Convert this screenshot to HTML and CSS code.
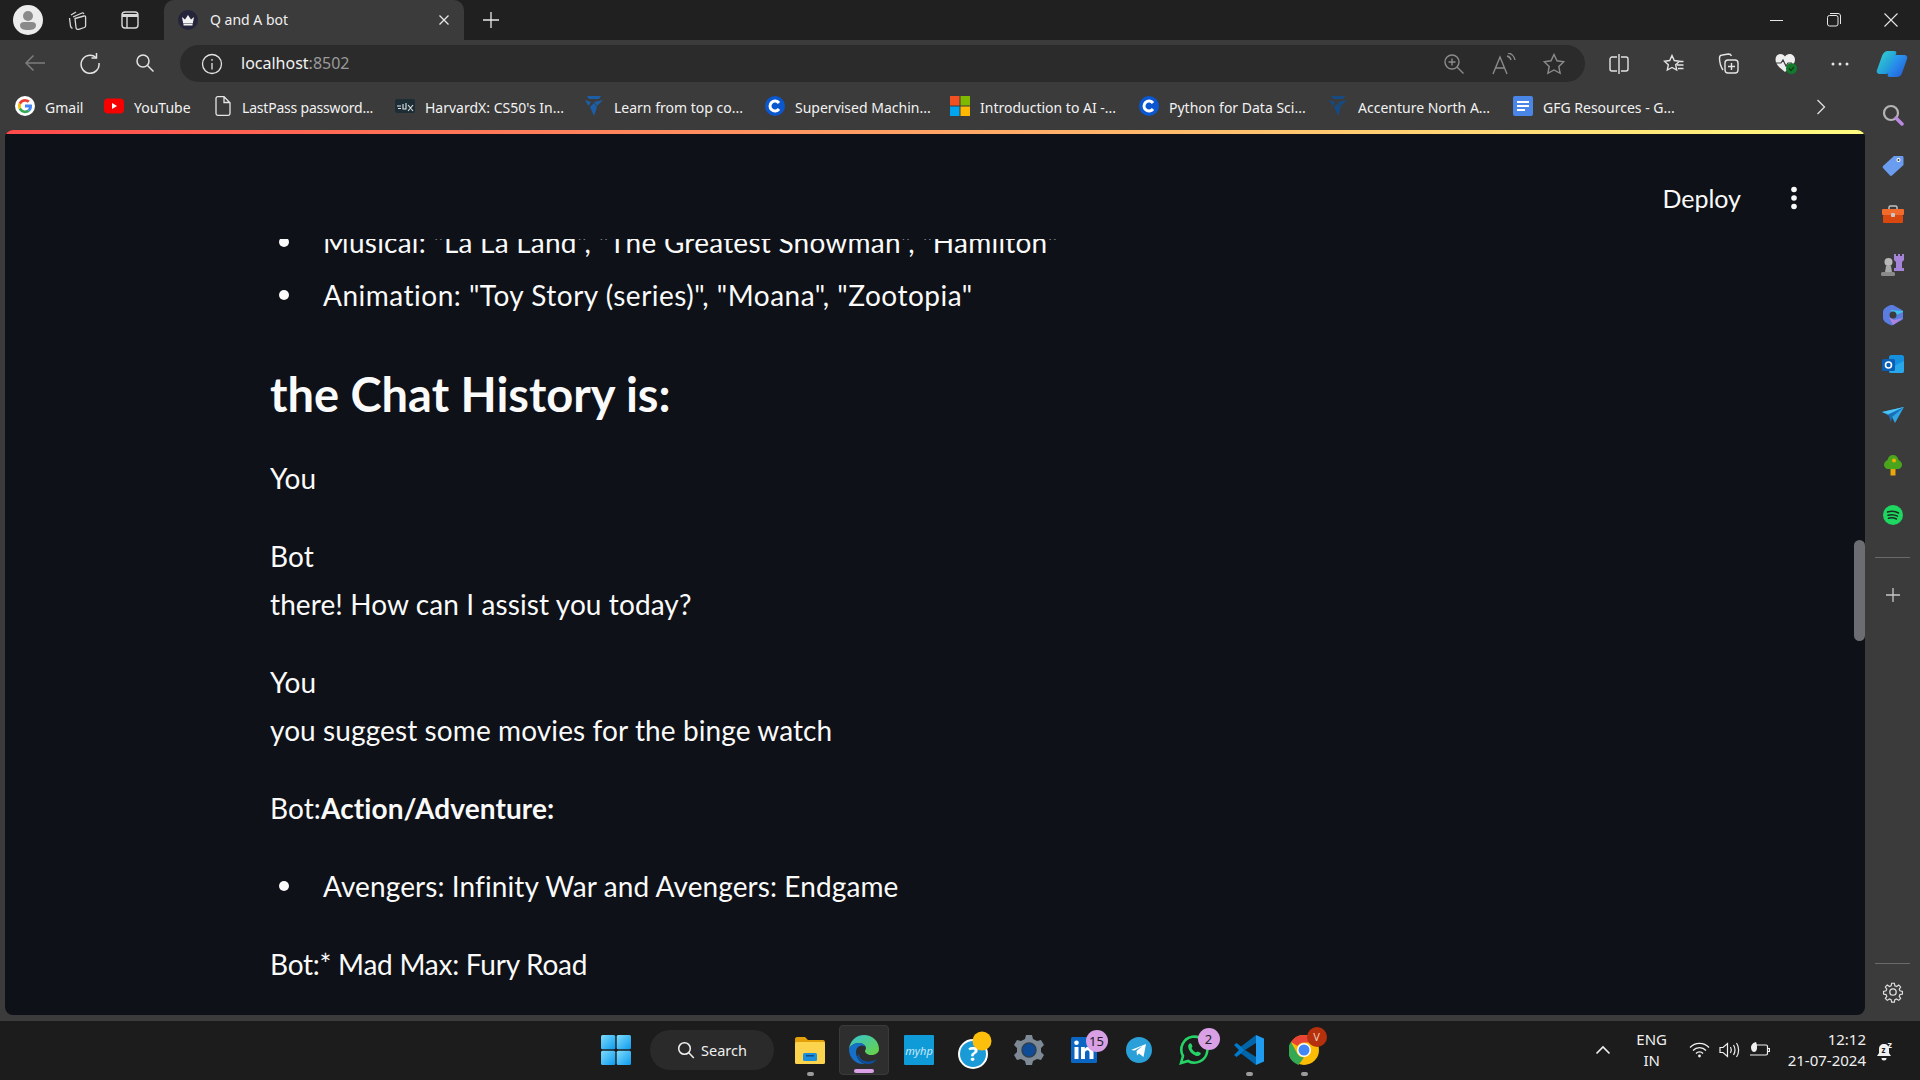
FILE: index.html
```html
<!DOCTYPE html>
<html lang="en">
<head>
    <meta charset="UTF-8" />
    <title>Q and A bot</title>
    <link rel="stylesheet" href="styles.css">
</head>
<body>
    <!-- ========= Title bar ========= -->
    <div class="titlebar">
        <div class="tb-left">
            <svg class="profile" width="30" height="30" viewBox="0 0 30 30"><circle cx="15" cy="15" r="15" fill="#ececec"/><circle cx="15" cy="11" r="5" fill="#8a8a8a"/><path d="M7 20c0-2 2-3 4-3h8c2 0 4 1 4 3 0 4-3 5-8 5s-8-1-8-5z" fill="#8a8a8a"/></svg>
            <svg class="tb-icon first" width="22" height="22" viewBox="0 0 22 22" fill="none" stroke="#d8d8d8" stroke-width="1.3"><path d="M4 6l5-3M2.500 9l1 8c.2 1 1 2 2 2.500M6 8l9-4c1-.3 1.500 0 1.800 1M8 9.500l9-2.500c1-.2 1.600.2 1.600 1.200v8.500c0 1-.5 1.500-1.300 1.800l-5.500 1.800c-1.400.4-2.800-.2-2.800-1.800z"/></svg>
            <svg class="tb-icon second" width="20" height="20" viewBox="0 0 20 20" fill="none" stroke="#d8d8d8" stroke-width="1.4"><rect x="2" y="2" width="16" height="16" rx="3"/><path d="M2 5.500h16" stroke-width="3"/><path d="M7 5v13"/></svg>
        </div>
        <div class="tab">
            <svg width="20" height="20" viewBox="0 0 20 20"><circle cx="10" cy="10" r="10" fill="#24243a"/><path d="M4 7l3 2.500L10 5l3 4.500L16 7l-1.200 6.500H5.200z" fill="#f2f2f2"/><rect x="5.500" y="14" width="9" height="1.500" fill="#f2f2f2"/></svg>
            <span class="tab-title">Q and A bot</span>
            <svg class="tab-close" width="12" height="12" viewBox="0 0 12 12" stroke="#e8e8e8" stroke-width="1.3"><path d="M1.500 1.500l9 9M10.500 1.500l-9 9"/></svg>
        </div>
        <svg class="new-tab" width="18" height="18" viewBox="0 0 18 18" stroke="#e8e8e8" stroke-width="1.300"><path d="M9 1v16M1 9h16"/></svg>
        <div class="win-controls">
            <svg width="14" height="14" viewBox="0 0 14 14" stroke="#e6e6e6" stroke-width="1"><path d="M0 7.500h13"/></svg>
            <svg width="14" height="14" viewBox="0 0 14 14" fill="none" stroke="#e6e6e6" stroke-width="1"><rect x=".5" y="2.500" width="10.500" height="10.500" rx="2"/><path d="M3 .5h8c1.500 0 2.500 1 2.500 2.500v8"/></svg>
            <svg width="14" height="14" viewBox="0 0 14 14" stroke="#e6e6e6" stroke-width="1.100"><path d="M.5.5l13 13M13.500.5l-13 13"/></svg>
        </div>
    </div>

    <!-- ========= Toolbar ========= -->
    <div class="toolbar">
        <svg class="nav back" width="22" height="18" viewBox="0 0 22 18" fill="none" stroke="#7d7d7d" stroke-width="1.500"><path d="M21 9H2M9.500 1.500L2 9l7.500 7.500"/></svg>
        <svg class="nav reload" width="22" height="22" viewBox="0 0 22 22" fill="none" stroke="#e4e4e4" stroke-width="1.500"><path d="M17 5.500A9 9 0 1 0 20 11"/><path d="M17.500 1v5h-5"/></svg>
        <svg class="nav find" width="20" height="20" viewBox="0 0 20 20" fill="none" stroke="#e4e4e4" stroke-width="1.500"><circle cx="8" cy="8" r="6"/><path d="M12.500 12.500l6 6"/></svg>
        <div class="addressbar">
            <svg width="22" height="22" viewBox="0 0 22 22" fill="none" stroke="#e4e4e4" stroke-width="1.300"><circle cx="11" cy="11" r="9.500"/><path d="M11 10v6.500M11 6v1.800"/></svg>
            <span class="url">localhost<span class="url-port">:8502</span></span>
            <div class="addr-actions">
                <svg width="22" height="22" viewBox="0 0 22 22" fill="none" stroke="#8c8c8c" stroke-width="1.400"><circle cx="9" cy="9" r="7"/><path d="M14 14l6.500 6.500M9 5.500v7M5.500 9h7"/></svg>
                <svg width="24" height="22" viewBox="0 0 24 22" fill="none" stroke="#8c8c8c" stroke-width="1.400"><path d="M1 21L8 4l7 17M3.500 15h9M15 3c2 .5 3.500 2 4 4M16 0c3.500.5 6.500 3.500 7 7"/></svg>
                <svg width="22" height="22" viewBox="0 0 22 22" fill="none" stroke="#8c8c8c" stroke-width="1.400"><path d="M11 1.500l3 6.300 6.800.9-5 4.800 1.300 6.800-6.100-3.300-6.100 3.300 1.300-6.800-5-4.800 6.800-.9z"/></svg>
            </div>
        </div>
        <div class="tool-actions">
            <svg width="20" height="20" viewBox="0 0 20 20" fill="none" stroke="#e4e4e4" stroke-width="1.400"><path d="M8 3H3C2 3 1 4 1 5v10c0 1 1 2 2 2h5M12 3h5c1 0 2 1 2 2v10c0 1-1 2-2 2h-5M10 0v20"/></svg>
            <svg width="21" height="20" viewBox="0 0 21 20" fill="none" stroke="#e4e4e4" stroke-width="1.400"><path d="M9 1.500l2.300 5 5.200.7-3.800 3.600 1 5.200-4.700-2.500L4.300 16l1-5.200L1.500 7.200l5.200-.7zM14 11h6.500M15 14.500h5.500M17 7.500h3.500"/></svg>
            <svg width="21" height="21" viewBox="0 0 21 21" fill="none" stroke="#e4e4e4" stroke-width="1.400"><path d="M5 17C3 14 1.500 9 1.500 5c0-1.500 1-3 3-3l6-1c1.500 0 2.500 .8 3 2"/><rect x="7" y="7" width="13" height="13" rx="3"/><path d="M13.500 10v7M10 13.500h7"/></svg>
            <svg class="health" width="23" height="22" viewBox="0 0 23 22"><path d="M10 19C6 16 .5 12 .5 6.500 .5 3 3 1 5.500 1 7.500 1 9 2 10 3.500 11 2 12.500 1 14.500 1 17 1 20 3 20 6.500c0 2-1 4-2 5-3 3-6 6-8 7.500z" fill="#eeeeee"/><path d="M1 10h5l2-3 3 6 2-3h4" fill="none" stroke="#3b3b3b" stroke-width="1.200"/><circle cx="16.500" cy="15.500" r="5.500" fill="#137a2c"/><path d="M14 15.500l2 2 3-3.500" fill="none" stroke="#0b3d18" stroke-width="1.200"/></svg>
            <svg class="dots" width="20" height="6" viewBox="0 0 20 6" fill="#e4e4e4"><circle cx="3" cy="3" r="1.500"/><circle cx="10" cy="3" r="1.500"/><circle cx="17" cy="3" r="1.500"/></svg>
            <svg class="copilot" width="32" height="28" viewBox="0 0 32 28"><defs><linearGradient id="copA" x1="0" y1="0" x2="1" y2="1"><stop offset="0" stop-color="#35d6d0"/><stop offset="1" stop-color="#1a7fe0"/></linearGradient><linearGradient id="copB" x1="0" y1="0" x2="1" y2="1"><stop offset="0" stop-color="#2bb3f5"/><stop offset="1" stop-color="#2455d9"/></linearGradient></defs><path d="M12 1h6c2 0 3 1 2 3l-6 17c-.8 2-2 3-4 3H4c-2.500 0-4-2-3-4L6 6c1-3 3-5 6-5z" fill="url(#copA)"/><path d="M20 5h8c2.500 0 4 2 3 4l-5 14c-1 3-3 4-6 4h-6c-2 0-3-1-2-3l6-17c.5-1 1-2 2-2z" fill="url(#copB)"/></svg>
        </div>
    </div>

    <div class="workspace">
        <div class="left-col">
            <!-- ========= Bookmarks ========= -->
            <div class="bookmarks">
                <div class="bm">
                    <svg width="20" height="20" viewBox="0 0 20 20"><circle cx="10" cy="10" r="10" fill="#fff"/><path d="M17 10.200c0-.6 0-1.100-.2-1.600H10v3h3.900c-.2.900-.7 1.700-1.500 2.200l2.300 1.800c1.400-1.300 2.300-3.100 2.300-5.400z" fill="#4285f4"/><path d="M10 17.200c1.900 0 3.500-.6 4.700-1.700l-2.300-1.800c-.6.400-1.400.7-2.400.7-1.900 0-3.400-1.200-4-2.900L3.700 13.300c1.200 2.300 3.600 3.900 6.300 3.900z" fill="#34a853"/><path d="M6 11.500c-.3-.9-.3-1.900 0-2.900L3.700 6.800c-1 1.900-1 4.500 0 6.500z" fill="#fbbc05"/><path d="M10 5.700c1 0 2 .4 2.700 1.100l2-2C13.500 3.600 11.800 2.900 10 2.900c-2.700 0-5.100 1.500-6.300 3.900L6 8.600c.6-1.700 2.100-2.900 4-2.900z" fill="#ea4335"/></svg>
                    <span>Gmail</span>
                </div>
                <div class="bm">
                    <svg width="20" height="20" viewBox="0 0 20 20"><rect y="2.500" width="20" height="15" rx="4" fill="#f70000"/><path d="M8 7l5 3-5 3z" fill="#fff"/></svg>
                    <span>YouTube</span>
                </div>
                <div class="bm tight">
                    <svg width="20" height="20" viewBox="0 0 20 20" fill="none" stroke="#e6e6e6" stroke-width="1.300"><path d="M3 2.500c0-1 .8-1.800 1.800-1.800h6.200l6 6v10.800c0 1-.8 1.800-1.800 1.800H4.800c-1 0-1.800-.8-1.800-1.800zM11 1v5.500h6"/></svg>
                    <span>LastPass password...</span>
                </div>
                <div class="bm">
                    <svg width="20" height="20" viewBox="0 0 20 20"><rect y="3" width="20" height="14" rx="2" fill="#1d2d35"/><path d="M2 10h4M3 12.500h3M8 8v5h3V7M13 9l5 6M18 9l-5 6" fill="none" stroke="#dfe7ea" stroke-width="1.100"/></svg>
                    <span>HarvardX: CS50's In...</span>
                </div>
                <div class="bm">
                    <svg width="20" height="20" viewBox="0 0 20 20" fill="#1c5fa8"><path d="M3 0h14l-2 3H5zM1 4l6 2-2.500 4zM19 4l-9 2 3 4zM6 11l4-4 3 4-3 9z"/></svg>
                    <span>Learn from top co...</span>
                </div>
                <div class="bm">
                    <svg width="20" height="20" viewBox="0 0 20 20"><circle cx="10" cy="10" r="10" fill="#0a57d0"/><path d="M14 7a5 5 0 1 0 0 6" fill="none" stroke="#fff" stroke-width="3"/></svg>
                    <span>Supervised Machin...</span>
                </div>
                <div class="bm">
                    <svg width="20" height="20" viewBox="0 0 20 20"><rect width="9.500" height="9.500" fill="#f25022"/><rect x="10.500" width="9.500" height="9.500" fill="#7fba00"/><rect y="10.500" width="9.500" height="9.500" fill="#00a4ef"/><rect x="10.500" y="10.500" width="9.500" height="9.500" fill="#ffb900"/></svg>
                    <span>Introduction to AI -...</span>
                </div>
                <div class="bm">
                    <svg width="20" height="20" viewBox="0 0 20 20"><circle cx="10" cy="10" r="10" fill="#0a57d0"/><path d="M14 7a5 5 0 1 0 0 6" fill="none" stroke="#fff" stroke-width="3"/></svg>
                    <span>Python for Data Sci...</span>
                </div>
                <div class="bm">
                    <svg width="20" height="20" viewBox="0 0 20 20" fill="#174a80"><path d="M3 0h14l-2 3H5zM1 4l6 2-2.500 4zM19 4l-9 2 3 4zM6 11l4-4 3 4-3 9z"/></svg>
                    <span>Accenture North A...</span>
                </div>
                <div class="bm">
                    <svg width="20" height="20" viewBox="0 0 20 20"><rect width="20" height="20" rx="2" fill="#4a86e8"/><path d="M4 5h12v2H4zM4 9h12v2H4zM4 13h8v2H4z" fill="#fff"/></svg>
                    <span>GFG Resources - G...</span>
                </div>
                <svg class="bm-more" width="10" height="16" viewBox="0 0 10 16" fill="none" stroke="#e0e0e0" stroke-width="1.300"><path d="M1.500 1l7 7-7 7"/></svg>
            </div>

            <!-- ========= Page ========= -->
            <main class="page">
                <div class="st-decoration"></div>
                <header class="st-header">
                    <span class="deploy">Deploy</span>
                    <svg class="kebab" width="8" height="24" viewBox="0 0 8 24" fill="#fafafa"><circle cx="4" cy="3.500" r="2.800"/><circle cx="4" cy="12" r="2.800"/><circle cx="4" cy="20.500" r="2.800"/></svg>
                </header>
                <div class="st-scrollbar"></div>
                <div class="st-block">
                    <ul class="answer">
                        <li class="quoted long">Musical: "La La Land", "The Greatest Showman", "Hamilton"</li>
                        <li class="quoted">Animation: "Toy Story (series)", "Moana", "Zootopia"</li>
                    </ul>
                    <h2>the Chat History is:</h2>
                    <p>You</p>
                    <p>Bot<br>there! How can I assist you today?</p>
                    <p>You<br>you suggest some movies for the binge watch</p>
                    <p>Bot:<strong>Action/Adventure:</strong></p>
                    <ul class="answer inline">
                        <li>Avengers: Infinity War and Avengers: Endgame</li>
                    </ul>
                    <p class="narrow">Bot:* Mad Max: Fury Road</p>
                </div>
            </main>
        </div>

        <!-- ========= Edge sidebar ========= -->
        <aside class="sidebar">
            <div class="side-icons">
                <div class="side-grid">
                    <svg width="22" height="22" viewBox="0 0 22 22" fill="none"><circle cx="9" cy="9" r="7" stroke="#b4b4b4" stroke-width="2.200"/><path d="M14 14l6 6" stroke="#b98ae0" stroke-width="3.500" stroke-linecap="round"/></svg>
                    <svg width="22" height="22" viewBox="0 0 22 22"><path d="M12 2h8c1 0 1.500.7 1.500 1.500v7.500L10 21.500c-.7.6-1.500.6-2 0L1 14c-.5-.6-.5-1.400 0-2z" fill="#6a9df0"/><circle cx="16.500" cy="6" r="2" fill="#fff"/><circle cx="16.500" cy="6" r="1" fill="#333"/></svg>
                    <svg width="22" height="22" viewBox="0 0 22 22"><path d="M7 6V3.500C7 2.500 7.800 2 8.500 2h5c.7 0 1.500.5 1.500 1.500V6" fill="none" stroke="#c2c2c2" stroke-width="1.500"/><rect y="5" width="22" height="6" rx="1" fill="#f26b2d"/><rect x="1" y="11" width="20" height="8" rx="1" fill="#d9480f"/><rect x="9" y="9" width="4" height="4" rx="1" fill="#c8c8c8"/></svg>
                    <svg width="24" height="24" viewBox="0 0 24 24"><circle cx="7.500" cy="9" r="4" fill="#b8b8b8"/><path d="M5 13h5l1 6H4z" fill="#a8a8a8"/><rect y="19" width="14" height="4" rx="1.500" fill="#8a8a8a"/><path d="M13 1h2v2h2V1h2v2h2V1h2v6l-2 2v6h2v3H13v-3h2V9l-2-2z" fill="#a583d8"/></svg>
                    <svg width="22" height="22" viewBox="0 0 22 22"><path d="M11 1l9 5c1 .5 1 1 1 2v6c0 1 0 1.500-1 2l-9 5c-1 .5-1.500.5-2.500 0C4 19 1 17 1 14V8c0-3 3-5 7.500-7z" fill="#5b7ce0"/><path d="M8 6l13 1v1l-7 3z" fill="#3fc1e8"/><path d="M21 14l-9 2-5-3 4 8z" fill="#b084dd"/><circle cx="11" cy="11" r="3.500" fill="#3b3b3b"/></svg>
                    <svg width="22" height="20" viewBox="0 0 22 20"><path d="M9 0h11c1 0 2 1 2 2v14c0 1-1 2-2 2H9c-1 0-2-1-2-2V2c0-1 1-2 2-2z" fill="#1490df"/><path d="M14 10l8-4v10c0 1-1 2-2 2H9c-1 0-2-1-2-2z" fill="#28a8ea"/><rect y="4" width="13" height="12" rx="1.500" fill="#0a5fb4"/><circle cx="6.500" cy="10" r="3" fill="none" stroke="#fff" stroke-width="1.600"/></svg>
                    <svg width="22" height="16" viewBox="0 0 22 16"><path d="M0 5l22-5-9 16-3-6z" fill="#2ea6e6"/><path d="M6 6l16-6-12 10-1 5z" fill="#1a6fb8"/><path d="M0 5l7 2L22 0z" fill="#4cc4f5"/></svg>
                    <svg width="18" height="21" viewBox="0 0 18 21"><path d="M9 0c3 0 5 2 5.500 5C17 6 18 8 18 10c0 2-2 4-4 4H4c-2 0-4-2-4-4 0-2 1-4 3.500-5C4 2 6 0 9 0z" fill="#4aa51d"/><rect x="6.500" y="14" width="5" height="6.500" fill="#e8a80c"/><circle cx="10" cy="5.500" r="2" fill="#f4b000"/></svg>
                    <svg width="20" height="20" viewBox="0 0 20 20"><circle cx="10" cy="10" r="10" fill="#1ed760"/><path d="M4.500 7c3.500-1 8-.8 11 1M5 10.200c3-.8 6.800-.6 9.500 .9M5.500 13.200c2.500-.6 5.500-.4 8 .8" fill="none" stroke="#1a2d1f" stroke-width="1.500" stroke-linecap="round"/></svg>
                </div>
                <div class="side-rule"></div>
                <svg class="side-add" width="16" height="16" viewBox="0 0 16 16" stroke="#c8c8c8" stroke-width="1.300"><path d="M8 1v14M1 8h14"/></svg>
            </div>
            <div class="side-bottom">
                <div class="side-rule"></div>
                <svg width="22" height="22" viewBox="0 0 22 22" fill="none" stroke="#e0e0e0" stroke-width="1.300"><circle cx="11" cy="11" r="3.200"/><path d="M9.500 1.300h3l.6 2.800 1.900.8 2.400-1.600 2.100 2.100-1.600 2.400.8 1.900 2.800.6v3l-2.800.6-.8 1.900 1.600 2.400-2.100 2.100-2.400-1.600-1.900.8-.6 2.800h-3l-.6-2.800-1.900-.8-2.400 1.600-2.100-2.100 1.600-2.400-.8-1.900-2.800-.6v-3l2.800-.6.8-1.900-1.600-2.400 2.100-2.100 2.400 1.600 1.900-.8z" transform="translate(1.100 1.100) scale(.9)"/></svg>
            </div>
        </aside>
    </div>

    <!-- ========= Taskbar ========= -->
    <footer class="taskbar">
        <div></div>
        <div class="apps">
            <svg class="start" width="30" height="30" viewBox="0 0 30 30"><defs><linearGradient id="winG" x1="0" y1="0" x2="1" y2="1"><stop offset="0" stop-color="#7fdcfb"/><stop offset="1" stop-color="#0d9bf0"/></linearGradient></defs><rect width="14.300" height="14.300" rx="1.500" fill="url(#winG)"/><rect x="15.700" width="14.300" height="14.300" rx="1.500" fill="url(#winG)"/><rect y="15.700" width="14.300" height="14.300" rx="1.500" fill="url(#winG)"/><rect x="15.700" y="15.700" width="14.300" height="14.300" rx="1.500" fill="url(#winG)"/></svg>
            <div class="search-pill">
                <svg width="18" height="18" viewBox="0 0 18 18" fill="none" stroke="#f0f0f0" stroke-width="1.500"><circle cx="7.500" cy="7.500" r="5.800"/><path d="M11.800 11.800l5 5.200"/></svg>
                <span>Search</span>
            </div>
            <div class="app">
                <svg width="30" height="28" viewBox="0 0 30 28"><path d="M0 3c0-1 1-2 2-2h8l3 3h15c1 0 2 1 2 2v4H0z" fill="#e3a008"/><rect y="6" width="30" height="22" rx="1.500" fill="#fcd34d"/><rect x="8" y="17" width="14" height="8" rx="1.500" fill="#1c8fdc"/><rect x="11" y="19" width="8" height="1.500" fill="#0d4f86"/></svg>
                <i class="dot"></i>
            </div>
            <div class="app active">
                <svg width="30" height="30" viewBox="0 0 30 30"><defs><linearGradient id="edgeG" x1="0" y1="0" x2="1" y2="1"><stop offset="0" stop-color="#36c3d6"/><stop offset="1" stop-color="#6ad43e"/></linearGradient></defs><path d="M15 0c8 0 15 6 15 14 0 4-4 6-8 6-3 0-6-2-6-4 0-1 1-1.500 1-3 0-3-4-5-7-5C5 8 1 11 0 14 1 6 7 0 15 0z" fill="url(#edgeG)"/><path d="M0 14C1 11 5 8 10 8c3 0 7 2 7 5 0-2-4-3-6-2-4 1-5 6-3 11 1 3 4 6 8 7C7 30 0 23 0 14z" fill="#1570c9"/><path d="M8 22c2 4 6 7 11 7 4 0 7-2 9-5-3 2-8 3-12 2-4-1-6-4-6-7-1 1-2 2-2 3z" fill="#0d4f9c"/></svg>
                <i class="dot wide"></i>
            </div>
            <div class="app">
                <svg width="30" height="30" viewBox="0 0 30 30"><rect width="30" height="30" rx="1" fill="#0f9ad8"/><text x="15" y="20" class="myhp">myhp</text></svg>
            </div>
            <div class="app">
                <svg class="help" width="36" height="38" viewBox="0 0 36 38"><circle cx="15" cy="23" r="14" fill="#1a9ad6" stroke="#fff" stroke-width="2"/><circle cx="24" cy="10" r="9.500" fill="#fcbf0c"/><text x="15" y="30" class="help-mark">?</text></svg>
            </div>
            <div class="app">
                <svg width="30" height="30" viewBox="0 0 30 30"><path d="M12 0h6l1 4 4 2 4-1 3 5-3 3v4l3 3-3 5-4-1-4 2-1 4h-6l-1-4-4-2-4 1-3-5 3-3v-4L0 10l3-5 4 1 4-2z" fill="#7d8a96"/><circle cx="15" cy="15" r="7" fill="#0f4c97"/><circle cx="15" cy="15" r="7" fill="none" stroke="#2d3f50" stroke-width="1.500"/></svg>
            </div>
            <div class="app">
                <div class="badged">
                    <svg width="26" height="26" viewBox="0 0 26 26"><rect width="26" height="26" rx="1.500" fill="#0a66c2"/><rect x="3.500" y="10" width="4" height="12" fill="#fff"/><circle cx="5.500" cy="5.800" r="2.300" fill="#fff"/><path d="M10 10h3.800v1.700c.8-1.300 2.100-2 3.800-2 3 0 4.900 1.800 4.900 5.300v7h-4v-6.300c0-1.600-.7-2.500-2-2.500s-2.500 1-2.500 2.700V22h-4z" fill="#fff"/></svg>
                    <b class="badge">15</b>
                </div>
            </div>
            <div class="app">
                <svg width="26" height="26" viewBox="0 0 26 26"><circle cx="13" cy="13" r="13" fill="#2a9fd8"/><path d="M5 13l15-6-2.500 13-4.500-3.500-2 2-.5-4.500 6-5-8 4.500z" fill="#fff"/></svg>
            </div>
            <div class="app">
                <div class="badged">
                    <svg width="30" height="30" viewBox="0 0 30 30"><path d="M2 28l2-7A13 13 0 1 1 9 26z" fill="none" stroke="#25d366" stroke-width="2.600"/><path d="M10 9c1-1 2-1 2.500 0l1 2.500-1 1.500c1 2 2.500 3.500 4.500 4.500l1.500-1 2.500 1c1 .5 1 1.500 0 2.500-2 2-5 1-8-1.500S8 11 10 9z" fill="#25d366"/></svg>
                    <b class="badge">2</b>
                </div>
            </div>
            <div class="app">
                <svg width="30" height="30" viewBox="0 0 30 30"><path d="M22 0l8 3.500v23L22 30z" fill="#1f9cf0"/><path d="M22 0v8L11 15 7 11.500 22 0z" fill="#0065a9"/><path d="M22 30v-8L11 15l-4 3.500z" fill="#0065a9"/><path d="M7 11.500L2.500 8 0 10l5 5-5 5 2.500 2L7 18.500 11 15z" fill="#007acc"/></svg>
                <i class="dot"></i>
            </div>
            <div class="app">
                <div class="badged">
                    <svg width="30" height="30" viewBox="0 0 30 30"><circle cx="15" cy="15" r="15" fill="#fbbc05"/><path d="M15 0a15 15 0 0 1 13 7.500H15A7.500 7.500 0 0 0 8.500 11L2 7A15 15 0 0 1 15 0z" fill="#ea4335"/><path d="M2 7l6.500 12A7.500 7.500 0 0 0 15 22.500L9.500 30A15 15 0 0 1 2 7z" fill="#34a853"/><circle cx="15" cy="15" r="7" fill="#fff"/><circle cx="15" cy="15" r="5.500" fill="#4285f4"/></svg>
                    <b class="badge red">V</b>
                </div>
                <i class="dot"></i>
            </div>
        </div>
        <div class="tray">
            <svg class="chev" width="16" height="10" viewBox="0 0 16 10" fill="none" stroke="#f0f0f0" stroke-width="1.600"><path d="M1.500 8.500L8 2l6.500 6.500"/></svg>
            <div class="lang">ENG<br>IN</div>
            <div class="tray-icons">
                <svg width="21" height="16" viewBox="0 0 21 16" fill="none" stroke="#f0f0f0" stroke-width="1.300"><path d="M1 5.500a13 13 0 0 1 19 0M4 8.500a9 9 0 0 1 13 0M7 11.500a4.500 4.500 0 0 1 7 0"/><circle cx="10.500" cy="14" r="1.400" fill="#f0f0f0" stroke="none"/></svg>
                <svg width="21" height="16" viewBox="0 0 21 16" fill="none" stroke="#f0f0f0" stroke-width="1.200"><path d="M1 5.500v5h3l4.500 4V1.500L4 5.500zM11.500 5c1 1.800 1 4.200 0 6M14.500 3c1.800 3 1.800 7 0 10M17.500 1c2.800 4 2.800 10 0 14"/></svg>
                <svg width="21" height="16" viewBox="0 0 21 16" fill="none" stroke="#f0f0f0" stroke-width="1.200"><path d="M7 3h10c1 0 1.500.7 1.500 1.500v7c0 .8-.5 1.500-1.500 1.500H1M18.500 6.500h2v3h-2"/><path d="M7 0C3 1 1 4 2.500 8c.5 1.200 1.500 2 2.500 2 3 0 4-5 2-10z" fill="#f0f0f0" stroke="none"/></svg>
            </div>
            <div class="clock">12:12<br>21-07-2024</div>
            <svg class="bell" width="18" height="24" viewBox="0 0 18 24"><path d="M8 6c-3 0-5 2-5 5v4l-2 3h14l-2-3v-4c0-3-2-5-5-5z" fill="#f0f0f0"/><path d="M5.500 20a2.500 2.500 0 0 0 5 0z" fill="#f0f0f0"/><text x="5.500" y="15" class="zz small">z</text><text x="11.500" y="10" class="zz">z</text></svg>
        </div>
    </footer>
</body>
</html>
```

FILE: styles.css
```css
:root {
    --chrome: #3b3b3b;
    --titlebar: #202020;
    --addr: #2b2b2b;
    --st-bg: #0e1117;
    --st-text: #fafafa;
    --ui-font: "Noto Sans", "Open Sans", sans-serif;
}

* { box-sizing: border-box; }

html, body {
    height: 100%;
}

body {
    margin: 0;
    width: 1920px;
    height: 1080px;
    display: flex;
    flex-direction: column;
    overflow: hidden;
    background: var(--chrome);
    color: #f0f0f0;
    font-family: var(--ui-font);
}

svg { flex: none; display: block; }

/* ====== Title bar ====== */
.titlebar {
    height: 40px;
    flex: none;
    display: flex;
    align-items: center;
    background: var(--titlebar);
}
.tb-left {
    width: 164px;
    display: flex;
    align-items: center;
    padding-left: 13px;
}
.tb-icon.first { margin-left: 24px; }
.tb-icon.second { margin-left: 31px; }
.tab {
    width: 300px;
    height: 40px;
    display: flex;
    align-items: center;
    padding: 0 14px;
    background: var(--chrome);
    border-radius: 10px 10px 0 0;
}
.tab-title {
    margin: -2px 0 0 12px;
    font-size: 14px;
    flex: 1;
}
.new-tab { margin-left: 18px; }
.win-controls {
    margin-left: auto;
    display: flex;
    align-items: center;
    gap: 43px;
    padding-right: 22px;
}

/* ====== Toolbar ====== */
.toolbar {
    height: 42px;
    flex: none;
    display: flex;
    align-items: flex-start;
    padding-top: 5px;
    background: var(--chrome);
    position: relative;
}
.nav { margin-top: 9px; }
.back { margin-left: 24px; }
.reload { margin-left: 33px; margin-top: 7px; }
.find { margin-left: 34px; margin-top: 8px; }
.addressbar {
    width: 1405px;
    height: 37px;
    margin-left: 25px;
    display: flex;
    align-items: center;
    padding: 0 20px 0 21px;
    background: var(--addr);
    border-radius: 19px;
}
.url {
    margin: -1px 0 0 18px;
    font-size: 16px;
    color: #f2f2f2;
}
.url-port { color: #9a9a9a; }
.addr-actions {
    margin-left: auto;
    display: flex;
    align-items: center;
    gap: 27px;
}
.tool-actions {
    flex: 1;
    height: 37px;
    display: flex;
    align-items: center;
    gap: 34px;
    padding-left: 24px;
}
.health { margin-left: 2px; }
.dots { margin-left: -2px; }
.copilot { margin-left: -8px; }

/* ====== Workspace ====== */
.workspace {
    flex: 1;
    display: flex;
    min-height: 0;
}
.left-col {
    width: 1865px;
    display: flex;
    flex-direction: column;
    padding-bottom: 6px;
}

/* ====== Bookmarks ====== */
.bookmarks {
    height: 48px;
    flex: none;
    display: grid;
    grid-template-columns: 89px 109px 182px 189px 181px 185px 189px 189px 185px 303px 10px;
    align-items: center;
    padding: 2px 0 0 15px;
    font-size: 14px;
}
.bm {
    display: flex;
    align-items: center;
    gap: 10px;
    white-space: nowrap;
    color: #f2f2f2;
}
.bm svg { margin-top: -2px; }
.bm.tight {
    gap: 9px;
    letter-spacing: -0.2px;
}

/* ====== Streamlit page ====== */
.page {
    flex: 1;
    min-height: 0;
    margin-left: 5px;
    position: relative;
    overflow: hidden;
    background: var(--st-bg);
    border-radius: 8px;
    color: var(--st-text);
    font-family: Lato, "Open Sans", sans-serif;
}
.st-decoration {
    position: absolute;
    inset: 0 0 auto 0;
    height: 4px;
    z-index: 3;
    background: linear-gradient(90deg, #ff4b4b, #fffd80);
}
.st-header {
    position: absolute;
    inset: 0 0 auto 0;
    height: 109px;
    z-index: 2;
    display: flex;
    justify-content: flex-end;
    align-items: flex-start;
    padding: 50px 67px 0 0;
    background: var(--st-bg);
}
.deploy {
    font-size: 25px;
    line-height: 36px;
}
.kebab {
    margin: 6px 0 0 49px;
}
.st-scrollbar {
    position: absolute;
    top: 410px;
    right: 0;
    width: 11px;
    height: 101px;
    z-index: 2;
    background: #6b6d72;
    border-radius: 6px;
}
.st-block {
    padding: 88px 0 0 265px;
    font-size: 28px;
    line-height: 48px;
    letter-spacing: 0.1px;
}
.st-block p {
    margin: 0 0 30px;
}
.st-block strong {
    font-weight: 700;
}
.st-block h2 {
    margin: 43px 0 28px;
    font-size: 47px;
    line-height: 64px;
    font-weight: 700;
    letter-spacing: 0;
}
.answer {
    margin: 0;
    padding-left: 9px;
    list-style: none;
}
.answer li {
    display: flex;
    align-items: center;
    gap: 34px;
    margin-bottom: 5px;
}
.answer li::before {
    content: "";
    width: 10px;
    height: 10px;
    flex: none;
    background: var(--st-text);
    border-radius: 50%;
}
.answer li.quoted {
    letter-spacing: 0.5px;
}
.answer li.quoted.long {
    letter-spacing: 0.23px;
}
.answer.inline {
    margin-bottom: 30px;
}
.st-block p.narrow {
    letter-spacing: -0.25px;
}

/* ====== Sidebar ====== */
.sidebar {
    flex: 1;
    display: flex;
    flex-direction: column;
    align-items: center;
    justify-content: space-between;
    padding: 8px 0 18px;
}
.side-icons {
    display: flex;
    flex-direction: column;
    align-items: center;
    width: 100%;
}
.side-grid {
    display: grid;
    grid-auto-rows: 50px;
    justify-items: center;
    align-items: center;
    margin-bottom: 17px;
}
.side-add { margin-top: 29px; }
.side-rule {
    width: 35px;
    height: 1px;
    background: #6a6a6a;
}
.side-bottom {
    display: flex;
    flex-direction: column;
    align-items: center;
    gap: 17px;
}

/* ====== Taskbar ====== */
.taskbar {
    height: 59px;
    flex: none;
    display: grid;
    grid-template-columns: 1fr auto 1fr;
    align-items: center;
    padding-bottom: 2px;
    background: #1c1c1c;
}
.apps {
    display: flex;
    align-items: center;
    padding-left: 12px;
}
.start { margin-right: 19px; }
.search-pill {
    width: 124px;
    height: 40px;
    display: flex;
    align-items: center;
    justify-content: center;
    gap: 6px;
    background: #2a2a2a;
    border-radius: 20px;
    font-size: 14.500px;
    margin-right: 8px;
}
.app {
    width: 55px;
    height: 50px;
    position: relative;
    display: flex;
    align-items: center;
    justify-content: center;
}
.app.active {
    width: 50px;
    margin: 0 2px;
    background: #2e2e2e;
    border: 1px solid #3a3a3a;
    border-radius: 4px;
}
.help { margin-left: 5px; }
.dot {
    position: absolute;
    bottom: -1px;
    left: 50%;
    width: 7px;
    height: 4px;
    margin-left: -3px;
    background: #9b9b9b;
    border-radius: 2px;
}
.dot.wide {
    width: 20px;
    margin-left: -10px;
    background: #d9a0e6;
    bottom: 1px;
}
.badged { position: relative; }
.badge {
    position: absolute;
    top: -7px;
    right: -11px;
    min-width: 22px;
    height: 22px;
    display: flex;
    align-items: center;
    justify-content: center;
    background: #d9a0e6;
    color: #202020;
    border-radius: 50%;
    font-size: 13px;
    font-weight: 400;
}
.badge.red {
    background: #b5300c;
    color: #f3c9b5;
    font-size: 11px;
    top: -8px;
    right: -8px;
    min-width: 20px;
    height: 20px;
}
.myhp {
    fill: #cdeaf7;
    font: italic 11px var(--ui-font);
    text-anchor: middle;
}
.help-mark {
    fill: #fff;
    font: 700 20px var(--ui-font);
    text-anchor: middle;
}
.zz {
    fill: #f0f0f0;
    font: 700 9px var(--ui-font);
}
.zz.small { fill: #1c1c1c; font-size: 8px; }

.tray {
    display: flex;
    align-items: center;
    justify-content: flex-end;
    padding-right: 26px;
}
.chev { margin-right: 21px; }
.lang {
    width: 40px;
    text-align: center;
    font-size: 15px;
    line-height: 21px;
    margin-right: 17px;
}
.tray-icons {
    display: flex;
    align-items: center;
    gap: 9px;
    margin-right: 18px;
}
.clock {
    text-align: right;
    font-size: 15px;
    line-height: 21px;
}
.bell { margin-left: 10px; }
```
